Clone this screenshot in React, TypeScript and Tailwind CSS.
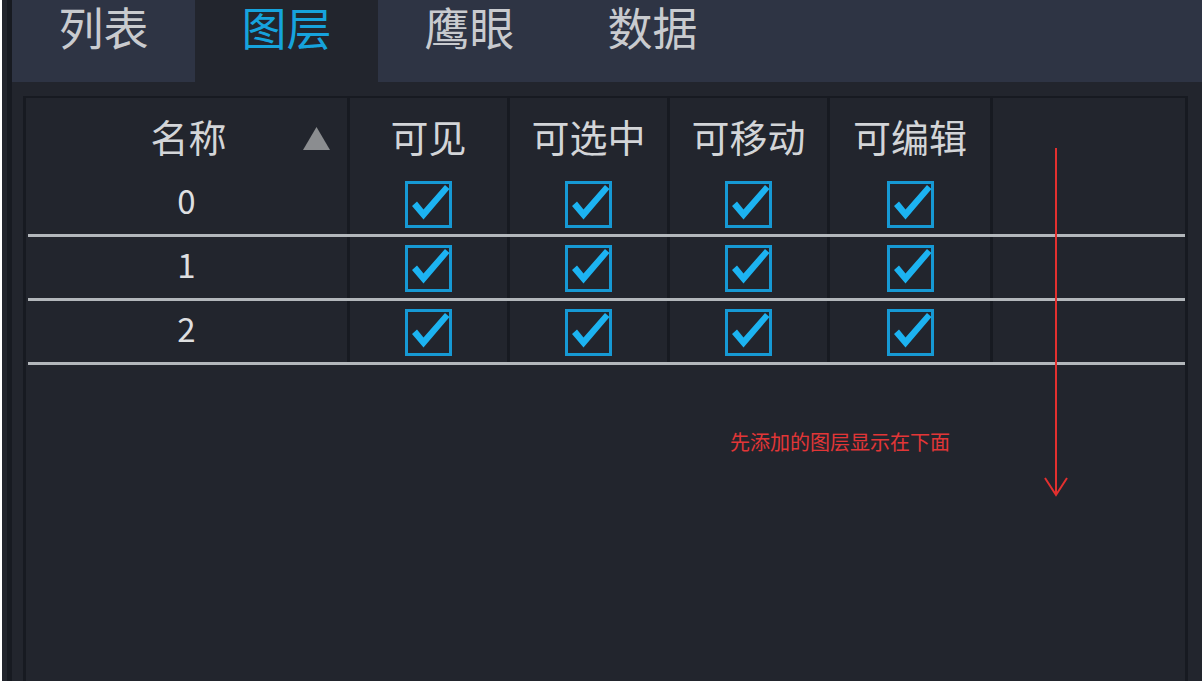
import React from "react";

const tabs = ["列表", "图层", "鹰眼", "数据"];
const headers = ["可见", "可选中", "可移动", "可编辑"];
const layers = ["0", "1", "2"];

const CheckBox = () => (
  <svg width="47" height="47" viewBox="0 0 47 47">
    <rect x="1.5" y="1.5" width="44" height="44" fill="none" stroke="#1699d4" strokeWidth="3" />
    <path d="M7 25 L12 20.5 L18.5 28.5 L40 4 L44.5 8 L18.5 38.5 Z" fill="#1cb3f1" />
  </svg>
);

const App: React.FC = () => {
  return (
    <div
      className="relative w-[1202px] h-[685px] bg-white"
      style={{ fontFamily: '"Noto Sans CJK SC", "Noto Sans", sans-serif' }}
    >
      <div className="ml-[2px] h-[681px] flex bg-[#22252d]">
        <div className="w-[5px]" />
        <div className="w-[5px] bg-[#171a21]" />
        <div className="flex-1 flex flex-col">
          {/* tabs */}
          <div className="h-[82px] flex bg-[#2e3444]">
            {tabs.map((t, i) => (
              <div
                key={t}
                className={
                  "w-[183px] flex justify-center text-[45px] leading-[54px] " +
                  (i === 1 ? "bg-[#22252d] text-[#16a3dd]" : "text-[#c9cbcf]")
                }
              >
                {t}
              </div>
            ))}
          </div>

          {/* table */}
          <div className="flex-1 flex pt-[14px] pl-[11px] pr-[14px]">
            <div className="flex-1 flex flex-col border-l-[3px] border-r-[3px] border-t-[2px] border-[#171a21]">
              <div className="h-[75px] grid grid-cols-[324px_160px_160px_160px_163px_1fr] text-[38px] text-[#d3d5d8]">
                <div className="relative flex items-center justify-center border-r-[3px] border-[#171a21]">
                  <span className="ml-[4px]">名称</span>
                  <svg className="absolute right-[17px] top-[29px]" width="27" height="23" viewBox="0 0 27 23">
                    <polygon points="13.5,0 27,23 0,23" fill="#8b8d90" />
                  </svg>
                </div>
                {headers.map((h) => (
                  <div key={h} className="flex items-center justify-center border-r-[3px] border-[#171a21]">
                    {h}
                  </div>
                ))}
                <div />
              </div>

              {layers.map((l) => (
                <div key={l} className="flex flex-col">
                  <div className="h-[61px] grid grid-cols-[324px_160px_160px_160px_163px_1fr]">
                    <div className="flex items-center justify-center pb-[5px] border-r-[3px] border-[#171a21] text-[33px] text-[#dedfe0]">
                      {l}
                    </div>
                    {headers.map((h) => (
                      <div key={h} className="flex items-center justify-center pt-[2px] border-r-[3px] border-[#171a21]">
                        <CheckBox />
                      </div>
                    ))}
                    <div />
                  </div>
                  <div className="h-[3px] ml-[2px] bg-[#b3b7bb]" />
                </div>
              ))}
            </div>
          </div>
        </div>
      </div>

      {/* annotation */}
      <svg className="absolute left-0 top-0 pointer-events-none" width="1202" height="685" viewBox="0 0 1202 685">
        <line x1="1056" y1="148" x2="1056" y2="495" stroke="#e3302f" strokeWidth="2" />
        <polyline points="1045,478 1056,495 1067,478" fill="none" stroke="#e3302f" strokeWidth="2" />
      </svg>
      <div className="absolute left-[730px] top-[430px] text-[20px] leading-[24px] text-[#e23637]">
        先添加的图层显示在下面
      </div>
    </div>
  );
};

export default App;
